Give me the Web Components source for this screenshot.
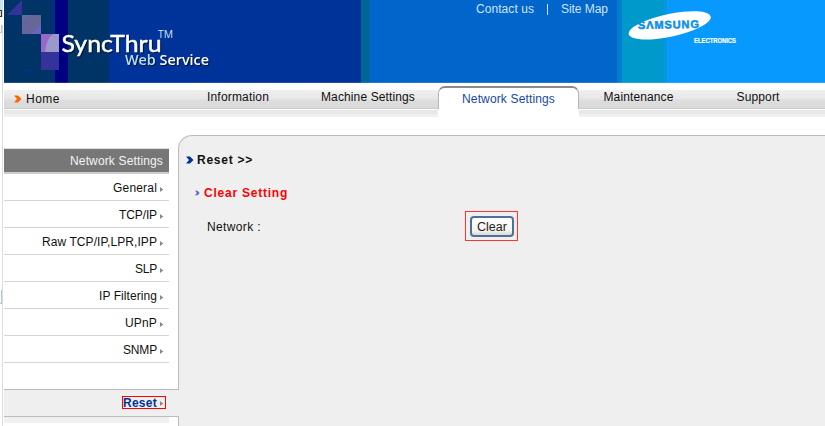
<!DOCTYPE html>
<html lang="en">
<head>
<meta charset="utf-8">
<title>SyncThru Web Service</title>
<style>
html,body{margin:0;height:100%;overflow:hidden;background:#fff}
body{font:12px "Liberation Sans",Arial,sans-serif;color:#111}
</style>
</head>
<body>
<sync-app></sync-app>
<script>
const define = (name, html, setup) => {
  const tpl = document.createElement('template');
  tpl.innerHTML = html;
  customElements.define(name, class extends HTMLElement {
    constructor() {
      super();
      this.attachShadow({mode: 'open'}).append(tpl.content.cloneNode(true));
    }
    connectedCallback() { if (setup) setup(this, this.shadowRoot); }
  });
};

/* A one-line label whose tracking is set so that it fills the width "w". */
define('fit-label', `<style>
:host{display:inline-block;white-space:nowrap;line-height:16px;height:16px;flex:none}
span{display:inline-block}</style><span><slot></slot></span>`, (host, root) => {
  const span = root.querySelector('span');
  const w = +host.getAttribute('w');
  span.style.letterSpacing = '0px';
  const n = host.textContent.length;
  span.style.letterSpacing = ((w - span.getBoundingClientRect().width) / n) + 'px';
  host.style.width = w + 'px';
});

define('chevron-icon', `<style>:host{display:block;flex:none;width:8px;height:8px}svg{display:block;width:100%;height:100%}</style>
<svg viewBox="0 0 8 8"><path fill="currentColor" d="M0 .5h4L7.5 4 4 7.5H0L3 4z"/></svg>`);

define('sync-logo', `<style>:host{display:block;width:240px;height:83px}svg{display:block}.s{filter:drop-shadow(1.3px 1.4px 0 #001533)}</style>
<svg width="240" height="83" viewBox="0 0 240 83" font-family="'Open Sans','Noto Sans',sans-serif">
<defs><linearGradient id="w" x1="0" x2="1"><stop offset="0" stop-color="#b5ddf5"/><stop offset=".3" stop-color="#b5e0f8"/><stop offset=".45" stop-color="#fff"/></linearGradient></defs>
<path fill="#339" d="M3 15 18 0v15z"/>
<path fill="#669" d="M18 15h19v19H18z"/><path fill="#66c" d="M37 25v9h-9z"/><path fill="#5577a8" d="M18 15h8l-8 6z" opacity=".5"/>
<path fill="#99c" d="M37 34h18v18H37z"/><path fill="#96c" d="M37 34h12q-7 5-8 18h-4z"/>
<path fill="#339" d="M37 52h18v18H37z"/><path fill="#039" d="M20 70h10v1H20z"/>
<g class="s"><text x="57.5" y="52" fill="#fff" stroke="#fff" stroke-width=".5" font-family="Lato,sans-serif" font-size="24" textLength="100" lengthAdjust="spacingAndGlyphs">SyncThru</text>
<text x="121" y="65" fill="url(#w)" font-size="14" font-weight="600" textLength="84" lengthAdjust="spacingAndGlyphs">Web Service</text></g>
<text x="154" y="38" fill="#d5e4f5" font-size="10" textLength="15" lengthAdjust="spacingAndGlyphs">TM</text>
</svg>`);

define('brand-logo', `<style>:host{display:block}svg{display:block}</style>
<svg width="130" height="44" viewBox="0 0 130 44" font-family="'Liberation Sans',sans-serif" font-weight="700">
<ellipse cx="48.7" cy="17.4" rx="42" ry="11.4" transform="rotate(-12 48.7 17.4)" fill="#fff"/>
<text x="17" y="21" fill="#0a8df0" stroke="#0a8df0" stroke-width=".5" font-size="11" textLength="61" transform="rotate(-1 17 21)">S&#923;MSUNG</text>
<text x="73" y="35" fill="#fff" stroke="#fff" stroke-width=".2" font-size="7" textLength="42" lengthAdjust="spacingAndGlyphs">ELECTRONICS</text>
</svg>`);

define('top-banner', `<style>
:host{display:grid;grid-template-columns:472px 142px 1fr;height:83px;box-sizing:border-box;color:#cfe3fa;
background:linear-gradient(90deg,#036 46px,#00307d 46px 47px,#036 47px 48px,#00307d 48px 49px,#036 49px 50px,#00307d 50px 51px,#000080 51px 64px,#036 64px 101px,#003078 101px 102px,#036 102px 105px,#039 105px 357px,#069 357px 366px,#06c 366px 613px,#0080cc 613px 618px,#09c 618px 660px,#0696df 660px 663px,#0899ff 663px)}
:host{border-bottom:1px solid #ffffff22}
nav{display:flex;padding-top:1px}
i{width:1px;height:11px;background:#cfe3fa;margin:3px 13px 0}
brand-logo{padding:8px 0 0 3px}
</style>
<sync-logo></sync-logo><nav><fit-label w="58">Contact us</fit-label><i></i><fit-label w="47">Site Map</fit-label></nav><brand-logo></brand-logo>`);

define('nav-tab', `<style>
:host{display:block;text-align:center;padding-top:6px;height:35px;box-sizing:border-box}
:host([active]){color:#1747a6;padding-top:3px}
.t{display:block}
:host([active]) .t{box-sizing:border-box;height:23px;padding-top:3px;border:2px solid transparent;border-top-color:#8b8b8b;border-radius:7px 7px 0 0;border-left:1px solid #b5b5b5;border-right:1px solid #b5b5b5;border-bottom:0;background:#fff;box-shadow:0 9px #fff}
</style><div class="t"><slot></slot></div>`);

define('nav-bar', `<style>
:host{display:grid;grid-template-columns:174px 120px 140px 141px 119px 120px;height:35px;
background:linear-gradient(#fff 7px,#f0f0f0 7px,#e6e6e6 16px,#dedede 17px,#dadada 25px,#ccc 25px 26px,#fff 26px 27px,#e8e8e8 27px 31px,#f0f0f0 31px 34px,#fff 34px)}
.home{display:flex;padding:8px 0 0 10px;color:#f60}
.home fit-label{color:#111;margin-left:4px}
chevron-icon{margin-top:4px}
</style>
<div class="home"><chevron-icon></chevron-icon><fit-label w="34">Home</fit-label></div>
<nav-tab><fit-label w="62">Information</fit-label></nav-tab>
<nav-tab><fit-label w="94">Machine Settings</fit-label></nav-tab>
<nav-tab active><fit-label w="93">Network Settings</fit-label></nav-tab>
<nav-tab><fit-label w="70">Maintenance</fit-label></nav-tab>
<nav-tab><fit-label w="43">Support</fit-label></nav-tab>`);

define('side-item', `<style>
:host{display:flex;justify-content:flex-end;height:27px;box-sizing:border-box;padding:6px 4px 0 0;border-bottom:1px solid #d5d5d5;margin-right:10px}
.box{display:flex;height:16px}
svg{display:block;width:4px;height:5px;margin:7px 1px 0 3px}
:host([current]){margin:0;padding:6px 13px 0 0;height:27px;background:#efefef;border-bottom:1px solid #bbb;font-weight:700;color:#039}
:host([current]) .box{border:1px solid #f00;height:11px;line-height:11px}
:host([current]) ::slotted(*){margin-top:-2px}
:host([current]) svg{margin-top:4px}
</style><div class="box"><slot></slot><svg viewBox="0 0 4 5"><path d="M0 0 3.3 2.5 0 5z" fill="#888"/></svg></div>`);

define('side-menu', `<style>
:host{display:block;padding-top:30px}
.title{margin-right:10px;background:#777;color:#f4f4f4;display:flex;justify-content:flex-end;padding:0 6px 0 0;border-bottom:2px solid #ccc;box-sizing:border-box;height:26px;align-items:center;border-top:1px solid #ddd}
.gap{height:26px;border-bottom:1px solid #bbb}
.rest{height:6px;background:#f0f0f0;margin-right:10px}
</style>
<div class="title"><fit-label w="93">Network Settings</fit-label></div>
<side-item><fit-label w="44">General</fit-label></side-item>
<side-item><fit-label w="38">TCP/IP</fit-label></side-item>
<side-item><fit-label w="115">Raw TCP/IP,LPR,IPP</fit-label></side-item>
<side-item><fit-label w="22">SLP</fit-label></side-item>
<side-item><fit-label w="58">IP Filtering</fit-label></side-item>
<side-item><fit-label w="32">UPnP</fit-label></side-item>
<side-item><fit-label w="34">SNMP</fit-label></side-item>
<div class="gap"></div>
<side-item current><fit-label w="34">Reset</fit-label></side-item>
<div class="rest"></div>`);

define('red-frame', `<style>:host{display:block;border:1px solid #f33;padding:4px 3px 3px 4px;box-sizing:border-box;width:53px;height:30px}</style><slot></slot>`);
define('push-button', `<style>:host{display:block}button{display:block;width:44px;height:21px;border:2px solid #4d7297;border-radius:4px;background:linear-gradient(#fff,#f4f3f0 75%,#ddd9d3);font:inherit;font-size:12.5px;color:#222;padding:0;line-height:16px;text-align:center}</style><button><slot></slot></button>`);

define('content-panel', `<style>
:host{display:block;box-sizing:border-box;background:#efefef;border:1px solid #bbb;border-right:0;border-bottom:0;border-radius:14px 0 0;margin-top:17px;padding:16px 0 0 7px}
.row{display:flex;align-items:center;height:16px}
.head{font-weight:700;color:#039}.head fit-label{color:#111;margin-left:3px}
.sub{font-weight:700;margin:17px 0 0 9px;color:#66c}.sub fit-label{color:#f00;margin-left:4px}
.sub chevron-icon{width:5px;height:6px}
.field{margin-top:10px;height:30px;padding-left:21px;display:grid;grid-template-columns:258px auto;justify-content:start}
.field fit-label{margin-top:1px}
</style>
<div class="row head"><chevron-icon></chevron-icon><fit-label w="56">Reset &gt;&gt;</fit-label></div>
<div class="row sub"><chevron-icon></chevron-icon><fit-label w="84">Clear Setting</fit-label></div>
<div class="row field"><fit-label w="54">Network :</fit-label><red-frame><push-button>Clear</push-button></red-frame></div>`);

define('sync-app', `<style>
:host{display:grid;grid-template-columns:4px 1fr;height:426px;overflow:hidden}
.edge{background:linear-gradient(90deg,#fff 2px,#ddd 2px 3px,#fff 3px);display:grid;grid-template-rows:10px 7px 8px 8px 257px 14px 1fr}
.edge :nth-child(1){background:#bfe5fa;width:2px}
.edge :nth-child(2){border:solid #333;border-width:1px 1px 1px 0;background:#dedbd0;width:1px}
.edge :nth-child(3){background:#fff}
.edge :nth-child(4),.edge :nth-child(6){border:solid #a9ccda;border-width:0 1px 1px 0;width:1px}
.body{display:grid;grid-template-columns:174px 1fr;height:308px}
side-menu{width:175px;z-index:1}
</style>
<div class="edge"><i></i><i></i><i></i><i></i><i></i><i></i></div>
<main><top-banner></top-banner><nav-bar></nav-bar><div class="body"><side-menu></side-menu><content-panel></content-panel></div></main>`);
</script>
</body>
</html>
